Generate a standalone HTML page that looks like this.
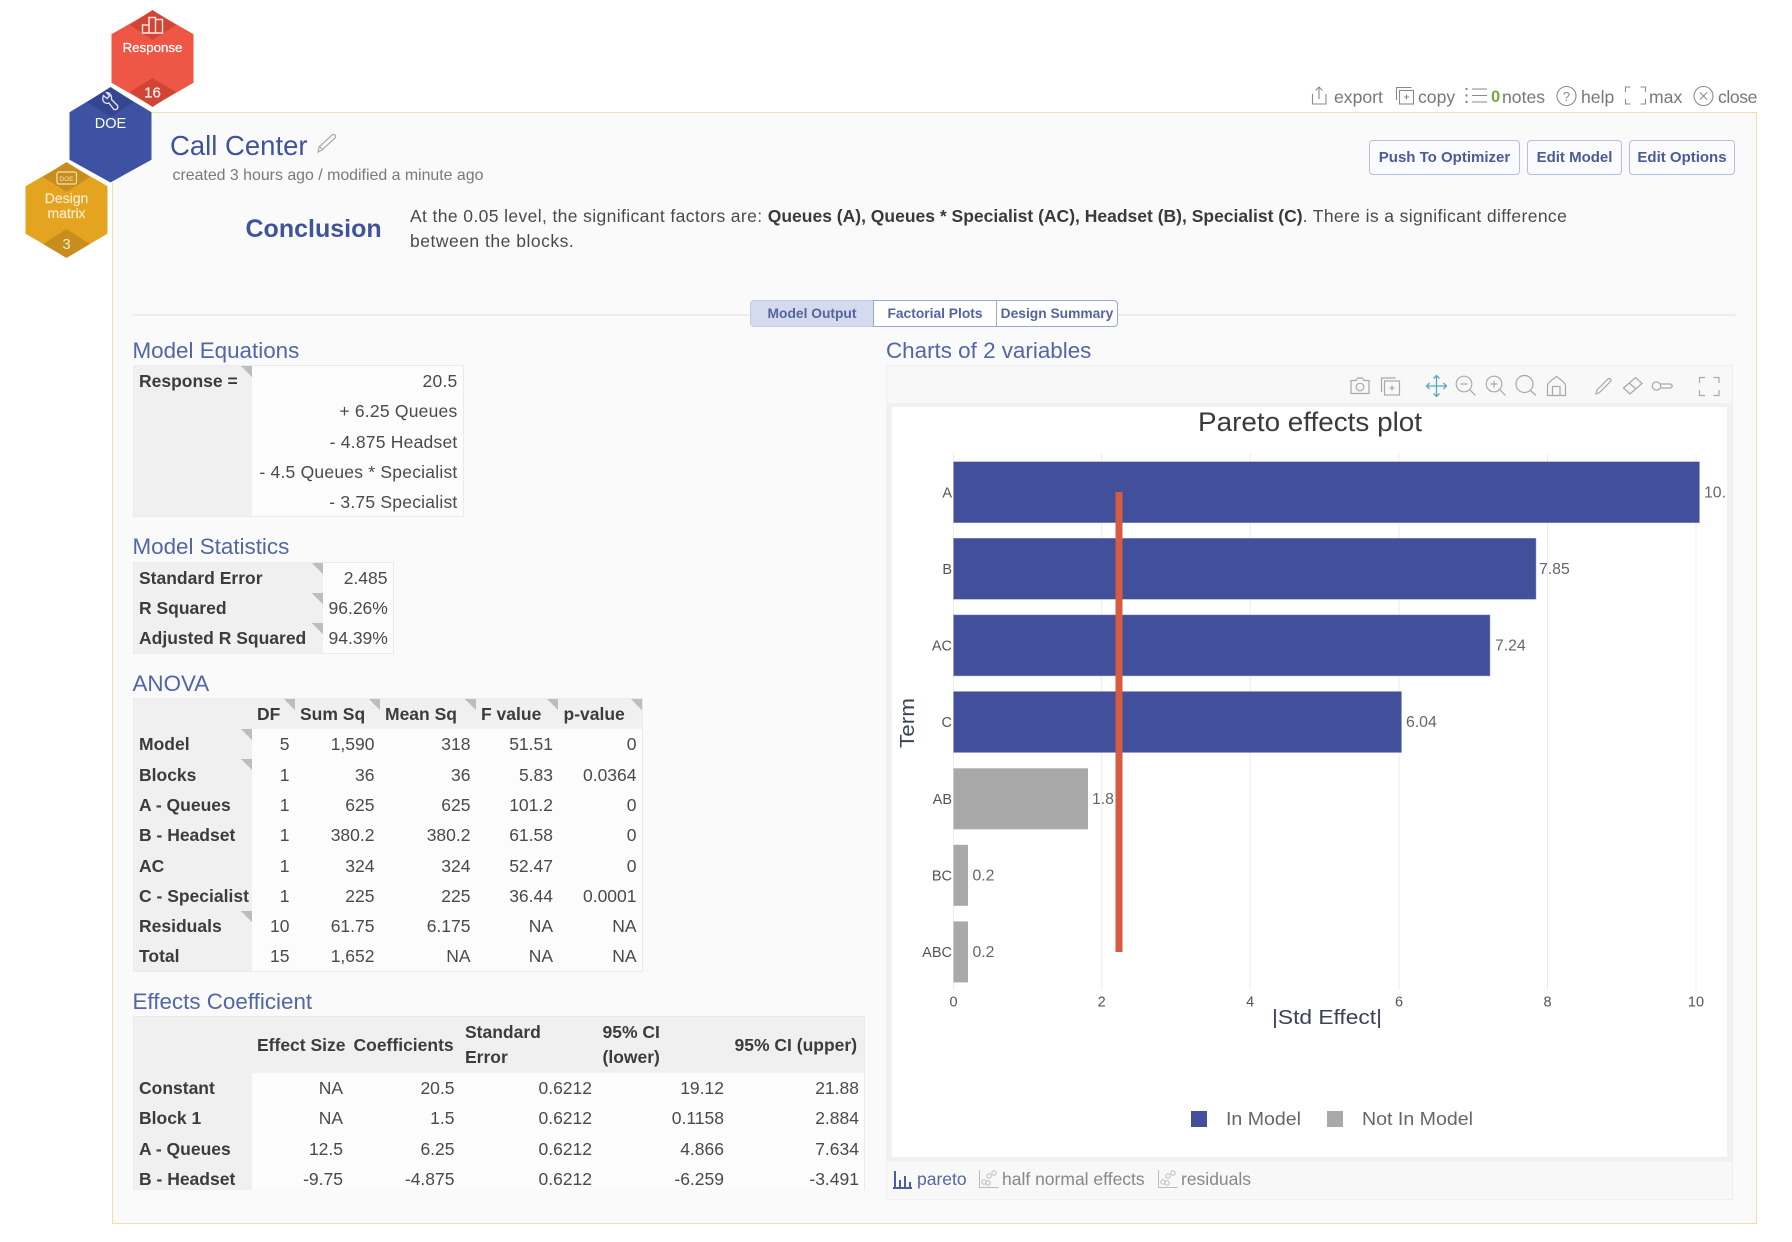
<!DOCTYPE html>
<html lang="en">
<head>
<meta charset="utf-8">
<title>Call Center</title>
<style>
html,body{margin:0;padding:0;background:#fff}
body{position:relative;width:1792px;height:1242px;overflow:hidden;font-family:"Liberation Sans",sans-serif;font-size:17.5px;color:#4a4a4a;filter:blur(.35px)}
.a{position:absolute;white-space:nowrap;line-height:24px}
.panel{position:absolute;left:112px;top:112px;width:1642.5px;height:1109.5px;background:#fafafa;border:1.5px solid #f0dfa6}
.h{position:absolute;white-space:nowrap;line-height:28px;font-size:22.4px;color:#5266a6}
.top{color:#777;font-size:17.6px}
.btn{position:absolute;box-sizing:border-box;top:140px;height:35px;border:1.5px solid #b4bfdd;border-radius:4px;background:#fbfbfd;color:#4a5a9c;font-weight:bold;font-size:15px;line-height:34px;text-align:center}
.tab{position:absolute;box-sizing:border-box;top:300px;height:27px;border:1.5px solid #9aa8d0;background:#fff;color:#55649f;font-weight:bold;font-size:13.8px;line-height:26px;text-align:center}
table{position:absolute;border-collapse:collapse;table-layout:fixed;background:#fcfcfc;border:1px solid #ebebeb;font-size:17.5px}
td,th{padding:1px 5px 0 5.5px;height:30.3px;line-height:22px;text-align:right;font-weight:normal;white-space:nowrap;box-sizing:border-box;overflow:hidden}
td.l,th.l{text-align:left;font-weight:bold;color:#3c3c3c;background-color:#f0f0f0}
th{background-color:#f0f0f0;color:#3c3c3c;font-weight:bold;text-align:left}
th.w{white-space:normal;line-height:25px}
.t{background-image:linear-gradient(to top right,transparent 50%,#bdbdbd 50%);background-size:11px 11px;background-repeat:no-repeat;background-position:top right}
.eq td{letter-spacing:.22px}
.eq td.l{letter-spacing:0}
svg{position:absolute;left:0;top:0}
svg text{font-family:"Liberation Sans",sans-serif}
</style>
</head>
<body>
<div class="panel"></div>

<!-- chart frame -->
<div style="position:absolute;left:886px;top:365px;width:847px;height:835px;box-sizing:border-box;background:#f8f8f8;border:1px solid #efefef"></div>
<div style="position:absolute;left:886px;top:403px;width:846px;height:759px;background:#f1f1f1"></div>
<div style="position:absolute;left:892px;top:407px;width:835px;height:750px;background:#fff"></div>

<!-- hexagons + chart + icons -->
<svg width="1792" height="1242" viewBox="0 0 1792 1242" style="z-index:3">
  <!-- Response -->
  <polygon points="152.5,10 194,34 194,83 152.5,107 111,83 111,34" fill="#ee5645" stroke="#fff" stroke-width="1"/>
  <polygon points="152.5,10 176,25 152.5,40 130,25" fill="#d14535"/>
  <polygon points="152.5,78 176,92 152.5,107 130,92" fill="#d14535"/>
  <!-- Design matrix -->
  <polygon points="66.5,162 108,186 108,234 66.5,258 25,234 25,186" fill="#e5a420" stroke="#fff" stroke-width="1"/>
  <polygon points="66.5,162 90,177 66.5,192 43,177" fill="#c98d1e"/>
  <polygon points="66.5,229 90,244 66.5,258 43,244" fill="#c98d1e"/>
  <!-- DOE -->
  <polygon points="110.5,87 152,112 152,160 110.5,183 69,160 69,112" fill="#3e52a4" stroke="#fff" stroke-width="1"/>
  <polygon points="110.5,87 134,102 110.5,117 87,102" fill="#34468f"/>

  <!-- hex icons -->
  <g fill="none" stroke="#fde9e3" stroke-width="1.4">
    <path d="M142.5 25h6.500v8h-6.500zM149 17.500h6.500v15.500h-6.500zM155.500 19.500h7v13.500h-7z"/>
  </g>
  <path d="M106.500 92.500L109.500 96 107 98.500 103.500 95.500Q101.500 100 104.500 102.500 106.500 104 109 103L113.500 109Q115.500 110.500 117.500 108.500 118.500 106.500 117 105L111.500 99.500Q112 96 110 94 108.500 92.500 106.500 92.500Z" fill="none" stroke="#e6eaf6" stroke-width="1.3"/>
  <rect x="57" y="172" width="19.500" height="12" rx="2" fill="none" stroke="#f7e2b0" stroke-width="1.2"/>
  <g fill="#fff" text-anchor="middle">
    <text x="66.500" y="181" font-size="6.500" fill="#f7e2b0">DOE</text>
    <text x="152.500" y="52" font-size="13.300" stroke="#fff" stroke-width=".25">Response</text>
    <text x="152.500" y="97.500" font-size="15" fill="#fdeeea" stroke="#fdeeea" stroke-width=".25">16</text>
    <text x="110.500" y="128" font-size="14.500">DOE</text>
    <text x="66.500" y="203" font-size="14" fill="#fbeccb" stroke="#fbeccb" stroke-width=".2">Design</text>
    <text x="66.500" y="218" font-size="14" fill="#fbeccb" stroke="#fbeccb" stroke-width=".2">matrix</text>
    <text x="66.500" y="249" font-size="15" fill="#fbeccb">3</text>
  </g>

  <!-- pencil by title -->
  <path d="M318 152l1-5 13-12q2-1 3 0t0 3l-13 12z M320 147l3 3" fill="none" stroke="#aaa" stroke-width="1.2"/>

  <!-- top icons -->
  <g fill="none" stroke="#8a8a8a" stroke-width="1.1">
    <path d="M1312.500 94v10h13.500v-10M1319 99V87M1315.500 90.500l3.500-3.500 3.500 3.500"/>
    <path d="M1396.500 100V87.500h15"/><rect x="1399.500" y="90.500" width="14" height="13.500"/><path d="M1404 97h5M1406.500 94.500v5"/>
    <path d="M1472 89h15M1472 95.500h15M1472 102h15"/>
    <circle cx="1566.500" cy="96" r="9.500"/>
    <path d="M1625.500 92v-5h5M1640.500 87h5v5M1645.500 99v5h-5M1630.500 104h-5v-5"/>
    <circle cx="1703.500" cy="96" r="9.500"/><path d="M1700 92.500l7 7M1707 92.500l-7 7"/>
  </g>
  <g fill="#8a8a8a"><circle cx="1466.500" cy="89" r="1.200"/><circle cx="1466.500" cy="95.500" r="1.200"/><circle cx="1466.500" cy="102" r="1.200"/></g>
  <text x="1566.500" y="101" font-size="13" fill="#8a8a8a" text-anchor="middle">?</text>

  <!-- chart toolbar icons -->
  <g fill="none" stroke="#a8a8a8" stroke-width="1.2">
    <path d="M1351 380.500h5l1.500-2.500h5l1.500 2.500h5v13h-18z"/><circle cx="1360" cy="387" r="3.800"/>
    <path d="M1381.500 392V378h14"/><rect x="1384.500" y="381" width="15" height="14"/><path d="M1389.500 388h5M1392 385.500v5"/>
    <circle cx="1464" cy="384" r="7.800"/><path d="M1470 390l5.500 5.500M1460.500 384h7"/>
    <circle cx="1494" cy="384" r="7.800"/><path d="M1500 390l5.500 5.500M1490.500 384h7M1494 380.500v7"/>
    <circle cx="1524.500" cy="384" r="8.500"/><path d="M1530.500 390.500l5.500 5"/>
    <path d="M1547.500 395.500V385q0-2 9-8.500q9 6.500 9 8.500v10.500zM1552.500 395.500v-9h7.500v9"/>
    <path d="M1596 394l1-4 11-11q1.500-1 2.500 0t0 2.500l-11 11z"/>
    <path d="M1623.500 388l12-10.500 6.500 6-12 10.500zM1629 383l7 6"/>
    <circle cx="1656.500" cy="386" r="4.200"/><path d="M1660.500 384h10l2 2-2 2h-9.500"/>
    <path d="M1699.500 383v-5.500h5.500M1713.500 377.500h5.500v5.500M1719 390v5.500h-5.500M1705 395.500h-5.500V390"/>
  </g>
  <g fill="none" stroke="#5aa8c4" stroke-width="1.3">
    <path d="M1436.500 376v20M1426.500 386h20M1433.500 378.500l3-3 3 3M1433.500 393.500l3 3 3-3M1429.500 383l-3 3 3 3M1443.500 383l3 3-3 3"/>
  </g>

  <!-- grid -->
  <g stroke="#ececec" stroke-width="1">
    <path d="M1101.700 453V990M1250.200 453V990M1399 453V990M1547.500 453V990M1696 453V990M953.500 453V990"/>
  </g>
  <!-- bars -->
  <g fill="#42509c" stroke="#8f9ac6" stroke-width=".5">
    <rect x="953.500" y="461.700" width="746" height="61"/>
    <rect x="953.500" y="538.300" width="582.500" height="61"/>
    <rect x="953.500" y="614.900" width="536.500" height="61"/>
    <rect x="953.500" y="691.500" width="448" height="61"/>
  </g>
  <g fill="#a9a9a9">
    <rect x="953.500" y="768.300" width="134.500" height="61"/>
    <rect x="953.500" y="844.800" width="14.500" height="61"/>
    <rect x="953.500" y="921.400" width="14.500" height="61"/>
  </g>
  <rect x="1115.500" y="492" width="7" height="460" fill="#d65b40"/>

  <!-- chart text -->
  <text x="1310" y="431" font-size="27" fill="#3a3a3a" text-anchor="middle" textLength="224" lengthAdjust="spacingAndGlyphs">Pareto effects plot</text>
  <g font-size="14.500" fill="#555" text-anchor="end">
    <text x="952" y="497.500">A</text><text x="952" y="574">B</text><text x="952" y="650.500">AC</text><text x="952" y="727">C</text>
    <text x="952" y="804">AB</text><text x="952" y="880.500">BC</text><text x="952" y="957">ABC</text>
  </g>
  <g font-size="15.800" fill="#666">
    <text x="1704" y="497.500">10.</text><text x="1539" y="574">7.85</text><text x="1495" y="650.500">7.24</text><text x="1406" y="727">6.04</text>
    <text x="1092" y="804">1.8</text><text x="972.500" y="880.500">0.2</text><text x="972.500" y="957">0.2</text>
  </g>
  <g font-size="14.500" fill="#555" text-anchor="middle">
    <text x="953.500" y="1006.500">0</text><text x="1101.700" y="1006.500">2</text><text x="1250.200" y="1006.500">4</text><text x="1399" y="1006.500">6</text><text x="1547.500" y="1006.500">8</text><text x="1696" y="1006.500">10</text>
  </g>
  <text x="1327" y="1024" font-size="20.500" fill="#3a4256" text-anchor="middle" textLength="110" lengthAdjust="spacingAndGlyphs">|Std Effect|</text>
  <text transform="translate(914,723) rotate(-90)" font-size="20" fill="#3a4256" text-anchor="middle" textLength="50" lengthAdjust="spacingAndGlyphs">Term</text>
  <rect x="1191" y="1111" width="16" height="16" fill="#42509c"/>
  <rect x="1327" y="1111" width="16" height="16" fill="#a9a9a9"/>
  <text x="1226" y="1125" font-size="18" fill="#666" textLength="75" lengthAdjust="spacingAndGlyphs">In Model</text>
  <text x="1362" y="1125" font-size="18" fill="#666" textLength="111" lengthAdjust="spacingAndGlyphs">Not In Model</text>

  <!-- bottom tab icons -->
  <g fill="none" stroke="#4c5ca4" stroke-width="2">
    <path d="M893 1188h19"/><path d="M895 1187v-16M900 1187v-7M905 1187v-11M910 1187v-5"/>
  </g>
  <g fill="none" stroke="#bbb" stroke-width="1">
    <path d="M979.500 1170v17.500h19"/><circle cx="984" cy="1182" r="2.200"/><circle cx="989" cy="1176" r="2.200"/><circle cx="994" cy="1173" r="2.200"/><circle cx="988" cy="1183" r="2.200"/>
    <path d="M1158.500 1170v17.500h19"/><circle cx="1163" cy="1182" r="2.200"/><circle cx="1168" cy="1176" r="2.200"/><circle cx="1173" cy="1173" r="2.200"/><circle cx="1167" cy="1183" r="2.200"/>
  </g>
</svg>

<!-- top bar -->
<span class="a top" style="left:1334px;top:85px">export</span>
<span class="a top" style="left:1418px;top:85px">copy</span>
<span class="a" style="left:1491px;top:85px;color:#7aa83c;font-weight:bold;font-size:16.5px">0</span>
<span class="a top" style="left:1502px;top:85px">notes</span>
<span class="a top" style="left:1581px;top:85px">help</span>
<span class="a top" style="left:1649px;top:85px">max</span>
<span class="a top" style="left:1718px;top:85px;letter-spacing:-.4px">close</span>

<!-- header -->
<span class="a" style="left:170px;top:130px;line-height:32px;font-size:27.500px;color:#40539a">Call Center</span>
<span class="a" style="left:172.500px;top:164px;font-size:15.900px;color:#7a7a7a">created 3 hours ago / modified a minute ago</span>
<div class="btn" style="left:1369px;width:151px">Push To Optimizer</div>
<div class="btn" style="left:1527px;width:95px">Edit Model</div>
<div class="btn" style="left:1629px;width:106px">Edit Options</div>

<span class="a" style="left:245.500px;top:213px;line-height:32px;font-size:25px;font-weight:bold;color:#40539a">Conclusion</span>
<span class="a" style="left:410px;top:204px;font-size:17.500px;color:#4a4a4a;letter-spacing:.38px">At the 0.05 level, the significant factors are: <b style="color:#3a3a3a;letter-spacing:0">Queues (A), Queues * Specialist (AC), Headset (B), Specialist (C)</b>. There is a significant difference</span>
<span class="a" style="left:410px;top:229px;font-size:17.500px;color:#4a4a4a;letter-spacing:.5px">between the blocks.</span>

<div style="position:absolute;left:133px;top:314px;width:1602px;height:1.500px;background:#ececec"></div>
<div class="tab" style="left:750px;width:124px;background:#d5dbee;border-color:#c3cce6;border-radius:4px 0 0 4px">Model Output</div>
<div class="tab" style="left:873px;width:124px">Factorial Plots</div>
<div class="tab" style="left:996px;width:122px;border-radius:0 4px 4px 0">Design Summary</div>

<!-- left column -->
<div class="h" style="left:132.500px;top:336.500px">Model Equations</div>
<table class="eq" style="left:132.500px;top:365px;width:331px;height:152px">
  <col style="width:119px"><col>
  <tr><td class="l t" rowspan="5" style="vertical-align:top;padding-top:4px">Response =</td><td>20.5</td></tr>
  <tr><td>+ 6.25 Queues</td></tr>
  <tr><td>- 4.875 Headset</td></tr>
  <tr><td>- 4.5 Queues * Specialist</td></tr>
  <tr><td>- 3.75 Specialist</td></tr>
</table>

<div class="h" style="left:132.500px;top:533px">Model Statistics</div>
<table style="left:132.500px;top:562px;width:261px">
  <col style="width:190px"><col>
  <tr><td class="l t">Standard Error</td><td>2.485</td></tr>
  <tr><td class="l t">R Squared</td><td>96.26%</td></tr>
  <tr><td class="l t">Adjusted R Squared</td><td>94.39%</td></tr>
</table>

<div class="h" style="left:132.500px;top:670px">ANOVA</div>
<table style="left:132.500px;top:698px;width:510px">
  <col style="width:118.500px"><col style="width:43px"><col style="width:85px"><col style="width:96px"><col style="width:82.500px"><col>
  <tr><th></th><th class="t">DF</th><th class="t">Sum Sq</th><th class="t">Mean Sq</th><th class="t">F value</th><th class="t">p-value</th></tr>
  <tr><td class="l t">Model</td><td>5</td><td>1,590</td><td>318</td><td>51.51</td><td>0</td></tr>
  <tr><td class="l t">Blocks</td><td>1</td><td>36</td><td>36</td><td>5.83</td><td>0.0364</td></tr>
  <tr><td class="l">A - Queues</td><td>1</td><td>625</td><td>625</td><td>101.2</td><td>0</td></tr>
  <tr><td class="l">B - Headset</td><td>1</td><td>380.2</td><td>380.2</td><td>61.58</td><td>0</td></tr>
  <tr><td class="l">AC</td><td>1</td><td>324</td><td>324</td><td>52.47</td><td>0</td></tr>
  <tr><td class="l">C - Specialist</td><td>1</td><td>225</td><td>225</td><td>36.44</td><td>0.0001</td></tr>
  <tr><td class="l t">Residuals</td><td>10</td><td>61.75</td><td>6.175</td><td>NA</td><td>NA</td></tr>
  <tr><td class="l">Total</td><td>15</td><td>1,652</td><td>NA</td><td>NA</td><td>NA</td></tr>
</table>

<div class="h" style="left:132.500px;top:988px">Effects Coefficient</div>
<div style="position:absolute;left:132.500px;top:1016px;width:733px;height:174px;overflow:hidden">
<table style="left:0;top:0;width:732.500px;border-bottom:0">
  <col style="width:118.500px"><col style="width:96.500px"><col style="width:111.500px"><col style="width:137.500px"><col style="width:132px"><col>
  <tr style="height:56px"><th></th><th>Effect Size</th><th>Coefficients</th><th class="w">Standard<br>Error</th><th class="w">95% CI<br>(lower)</th><th>95% CI (upper)</th></tr>
  <tr><td class="l">Constant</td><td>NA</td><td>20.5</td><td>0.6212</td><td>19.12</td><td>21.88</td></tr>
  <tr><td class="l">Block 1</td><td>NA</td><td>1.5</td><td>0.6212</td><td>0.1158</td><td>2.884</td></tr>
  <tr><td class="l">A - Queues</td><td>12.5</td><td>6.25</td><td>0.6212</td><td>4.866</td><td>7.634</td></tr>
  <tr><td class="l">B - Headset</td><td>-9.75</td><td>-4.875</td><td>0.6212</td><td>-6.259</td><td>-3.491</td></tr>
</table>
</div>

<!-- right column -->
<div class="h" style="left:886px;top:336.500px">Charts of 2 variables</div>
<span class="a" style="left:917px;top:1167px;color:#5266a6;font-size:17.500px;z-index:4">pareto</span>
<span class="a" style="left:1002px;top:1167px;color:#888;font-size:17.500px;z-index:4">half normal effects</span>
<span class="a" style="left:1181px;top:1167px;color:#888;font-size:17.500px;z-index:4">residuals</span>
</body>
</html>
